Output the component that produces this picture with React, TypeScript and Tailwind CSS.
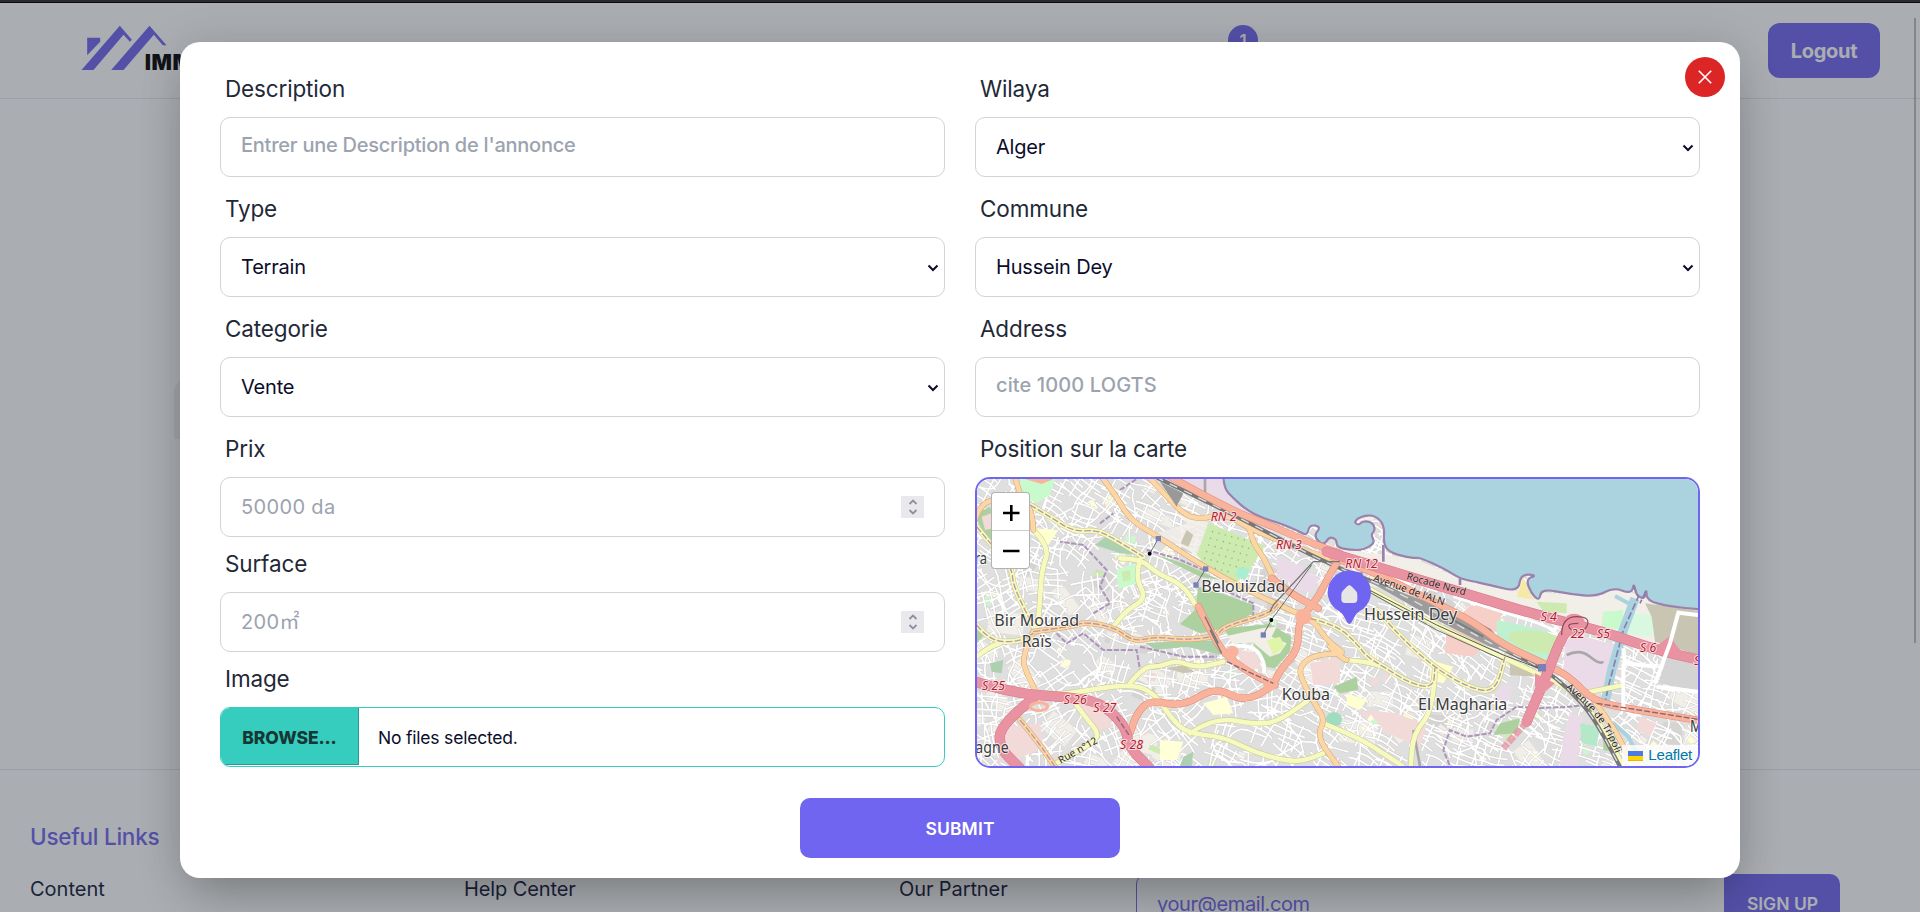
import React from "react";

type Pt = [number, number];

const smooth = (pts: Pt[]) => {
  let d = `M${pts[0][0]} ${pts[0][1]}`;
  for (let i = 1; i < pts.length - 1; i++) {
    const mx = (pts[i][0] + pts[i + 1][0]) / 2;
    const my = (pts[i][1] + pts[i + 1][1]) / 2;
    d += `Q${pts[i][0]} ${pts[i][1]} ${mx} ${my}`;
  }
  const last = pts[pts.length - 1];
  return d + `L${last[0]} ${last[1]}`;
};

const makeRandom = (seed: number) => () => {
  seed = (seed * 1664525 + 1013904223) % 4294967296;
  return seed / 4294967296;
};

// Small residential streets: rotated clusters of blocks plus winding lanes.
const buildStreets = () => {
  const rnd = makeRandom(77);
  let grid = "";
  let lanes = "";
  for (let gx = 0; gx < 22; gx++) {
    for (let gy = 0; gy < 10; gy++) {
      const cx = 40 + gx * 102 + (rnd() - 0.5) * 40;
      const cy = 60 + gy * 92 + (rnd() - 0.5) * 40;
      const a = gx < 9 && gy > 2 ? rnd() * 3 : 0.5 + (rnd() - 0.5) * 0.5;
      const c = Math.cos(a);
      const s = Math.sin(a);
      const p = (u: number, v: number) =>
        `${(cx + u * c - v * s).toFixed(0)} ${(cy + u * s + v * c).toFixed(0)}`;
      const n = 3 + Math.floor(rnd() * 3);
      for (let k = 0; k < n; k++) {
        const v = -42 + k * 22 + rnd() * 7;
        const b = (rnd() - 0.5) * 36;
        grid += `M${p(-30 - rnd() * 30, v)}Q${p(0, v + b)} ${p(30 + rnd() * 30, v)}`;
      }
      grid += `M${p(-24, -45)}L${p(-20 + rnd() * 10, 45)}M${p(24, -45)}L${p(20 + rnd() * 10, 40)}`;
      let x = cx;
      let y = cy;
      let dir = rnd() * 6.3;
      lanes += `M${x.toFixed(0)} ${y.toFixed(0)}`;
      for (let k = 0; k < 5; k++) {
        dir += (rnd() - 0.5) * 1.6;
        const x1 = x + Math.cos(dir) * 20;
        const y1 = y + Math.sin(dir) * 20;
        dir += (rnd() - 0.5) * 1.6;
        x = x1 + Math.cos(dir) * 20;
        y = y1 + Math.sin(dir) * 20;
        lanes += `Q${x1.toFixed(0)} ${y1.toFixed(0)} ${x.toFixed(0)} ${y.toFixed(0)}`;
      }
    }
  }
  return { grid, lanes };
};

const buildPatches = () => {
  const rnd = makeRandom(9);
  const fills = ["#f2efe9", "#f2efe9", "#d6d4d3", "#ffffe0", "#f2dad9", "#f2efe9", "#ffffd0", "#cdebb0", "#c8facc"];
  return Array.from({ length: 210 }, (_, i) => {
    const x = rnd() * 2180;
    const y = 30 + rnd() * 850;
    const big = i < 70;
    const w = big ? 50 + rnd() * 60 : 14 + rnd() * 24;
    const h = big ? 30 + rnd() * 40 : 12 + rnd() * 18;
    const f = big ? fills[Math.floor(rnd() * 3)] : fills[Math.floor(rnd() * fills.length)];
    return { x, y, w, h, f, r: rnd() * 60 };
  });
};

const STREETS = buildStreets();
const PATCHES = buildPatches();

const COAST: Pt[] = [
  [760, 20], [762, 55], [790, 85], [830, 120], [880, 145], [930, 160], [980, 180], [1012, 198], [1018, 164],
  [1054, 170], [1030, 198], [1060, 228], [1078, 200], [1100, 208], [1100, 232], [1140, 240], [1180, 240],
  [1216, 218], [1202, 195], [1216, 180], [1208, 158], [1180, 152], [1165, 166], [1152, 155], [1172, 140],
  [1212, 134], [1244, 165], [1240, 225], [1265, 250], [1330, 265], [1348, 262], [1420, 295], [1470, 325],
  [1500, 332], [1560, 345], [1645, 366], [1652, 312], [1702, 316], [1668, 326], [1682, 368], [1708, 394],
  [1714, 356], [1800, 372], [1880, 380], [1930, 352], [1985, 372], [1992, 338], [1998, 376], [2024, 388],
  [2030, 356], [2030, 392], [2100, 410], [2190, 418],
];

const ORANGE: Pt[][] = [
  [[395, 20], [440, 80], [480, 150], [565, 200], [700, 290], [850, 370], [960, 420], [1030, 450], [1070, 510], [1115, 545]],
  [[535, 20], [600, 90], [640, 130], [680, 148], [770, 132], [835, 175], [1000, 240], [1110, 275]],
  [[800, 145], [835, 160], [850, 220], [880, 260], [915, 335]],
  [[15, 150], [30, 105], [80, 85], [130, 100]],
  [[135, 20], [150, 80], [185, 120], [190, 180]],
  [[190, 485], [300, 470], [350, 455], [440, 475], [490, 515], [560, 500], [640, 510], [740, 500], [760, 470], [900, 430], [925, 400]],
  [[190, 485], [155, 560], [170, 610], [200, 670]],
  [[150, 750], [200, 810], [255, 890]],
  [[1115, 550], [1040, 550], [985, 590], [1000, 640], [1040, 710], [1065, 750], [1040, 800], [1105, 890]],
  [[1080, 530], [1110, 560], [1130, 570]],
  [[1870, 690], [1930, 770], [1970, 850]],
];

const YELLOW: Pt[][] = [
  [[180, 105], [240, 140], [310, 185], [380, 180], [430, 205], [520, 260]],
  [[190, 180], [240, 230], [215, 300], [210, 400], [200, 485]],
  [[450, 265], [510, 265], [560, 310], [640, 345], [680, 410]],
  [[510, 270], [495, 320], [530, 385], [470, 420], [430, 470]],
  [[20, 465], [60, 515], [150, 515], [190, 490]],
  [[20, 560], [60, 530], [90, 520]],
  [[20, 170], [60, 220], [125, 290], [130, 350], [190, 470]],
  [[240, 675], [300, 670], [480, 640], [555, 670], [600, 740], [650, 790], [760, 800], [860, 850], [980, 880], [1060, 850]],
  [[480, 640], [520, 590], [570, 590], [620, 570], [680, 595], [760, 575]],
  [[660, 790], [730, 740], [870, 765], [930, 750], [1010, 695]],
  [[300, 680], [345, 740], [395, 800], [330, 840], [250, 885]],
  [[1020, 445], [1100, 465], [1160, 520], [1190, 560], [1240, 590], [1320, 640], [1390, 655], [1395, 590]],
  [[1220, 420], [1290, 500], [1390, 590], [1490, 650], [1575, 670], [1605, 560]],
  [[1395, 600], [1390, 720], [1330, 790], [1322, 890]],
  [[1060, 760], [1160, 800], [1240, 850], [1300, 890]],
  [[1150, 330], [1300, 415], [1480, 505], [1700, 610], [1790, 650], [1880, 740], [1960, 890]],
  [[1125, 570], [1190, 575], [1240, 590]],
  [[1840, 670], [1960, 645]],
];

const SALMON: Pt[][] = [
  [[685, 410], [720, 480], [760, 550], [840, 610], [915, 645]],
  [[1105, 270], [1070, 330], [1040, 390], [985, 450], [985, 540], [930, 600], [905, 655], [820, 695], [735, 650], [640, 710], [540, 690], [500, 730], [480, 790]],
  [[905, 325], [960, 370], [1045, 415]],
  [[600, 20], [780, 120], [900, 165], [1000, 210], [1110, 250]],
  [[1090, 262], [1200, 300], [1400, 400], [1510, 455], [1600, 525], [1720, 580], [1800, 620], [1870, 695], [2000, 720], [2190, 752]],
];

const MOTORWAY: Pt[][] = [
  [[15, 635], [130, 670], [300, 682], [380, 695], [430, 730], [470, 780], [475, 830], [540, 895]],
  [[190, 685], [95, 760], [85, 830], [150, 895]],
  [[1070, 245], [1250, 300], [1450, 360], [1700, 435], [1900, 485], [2060, 540], [2190, 570]],
  [[1805, 460], [1775, 500], [1740, 590], [1715, 650], [1670, 755]],
];

function Roads({ roads, casing, fill, width }: { roads: Pt[][]; casing: string; fill: string; width: number }) {
  const d = roads.map(smooth).join("");
  return (
    <g fill="none" strokeLinecap="round" strokeLinejoin="round">
      <path d={d} stroke={casing} strokeWidth={width + 3} />
      <path d={d} stroke={fill} strokeWidth={width} />
    </g>
  );
}

function MapLabel({ x, y, w, children }: { x: number; y: number; w: number; children: string }) {
  return (
    <text x={x} y={y} textLength={w} lengthAdjust="spacingAndGlyphs" fontSize="46" fill="#3c3c3c" stroke="#ffffff" strokeOpacity="0.75" strokeWidth="6" paintOrder="stroke">
      {children}
    </text>
  );
}

function RoadRef({ x, y, children }: { x: number; y: number; children: string }) {
  return (
    <text x={x} y={y} fontSize="37" fontStyle="italic" fill="#b3202c" stroke="#f7dfe2" strokeWidth="6" paintOrder="stroke">
      {children}
    </text>
  );
}

function StreetMap() {
  const coast = smooth(COAST);
  const rail: Pt[] = [[555, 20], [700, 90], [850, 165], [1080, 285], [1250, 350], [1420, 440], [1560, 520], [1720, 595], [1800, 660], [1870, 740], [1950, 890]];
  return (
    <svg viewBox="21 27 2163 861" preserveAspectRatio="none" className="block h-full w-full font-['Noto_Sans',sans-serif]">
      <rect x="0" y="0" width="2200" height="900" fill="#e0dfdf" />
      {PATCHES.map((p, i) => (
        <rect key={i} x={p.x} y={p.y} width={p.w} height={p.h} fill={p.f} transform={`rotate(${p.r} ${p.x} ${p.y})`} />
      ))}
      <path d={STREETS.grid + STREETS.lanes} fill="none" stroke="#cfcdcb" strokeWidth="7.5" strokeLinecap="round" />
      <path d={STREETS.grid + STREETS.lanes} fill="none" stroke="#ffffff" strokeWidth="5" strokeLinecap="round" />

      <path d="M1110 238L1330 265 1480 330 1640 362 1890 380 1930 355 2184 418V560L1900 480 1450 350 1110 255Z" fill="#f2efe9" />
      <path d="M590 27H762L790 95 930 170 1010 210 1000 225 780 130Z" fill="#e9dbe8" />
      <path d="M540 27L620 130 700 150 720 160 680 255 560 190 650 160Z" fill="#f2efe9" opacity="0.8" />
      <path d="M650 180L670 195 655 230 632 220Z" fill="#c8c6b3" />
      <path d="M150 27H255L240 75 200 100 155 75Z" fill="#c8facc" />
      <path d="M165 27H250L215 42Z" fill="#f9b29c" />
      <path d="M21 130L60 110 80 170 60 220 25 160Z" fill="#add19e" />
      <path d="M35 140L65 130 70 175 45 180Z" fill="#f2dad9" />
      <path d="M195 175L265 180 235 225Z" fill="#ffffd0" />
      <path d="M375 225L420 190 480 235 510 255 450 250Z" fill="#add0b0" />
      <path d="M440 300L495 280 500 340 445 358Z" fill="#c8facc" />
      <path d="M455 305L480 300 482 330 460 335Z" fill="#cdebb0" />
      <path d="M560 255L640 280 750 330 690 320Z" fill="#add0a0" />
      <path d="M715 158L885 228 835 305 795 340 720 300 680 255Z" fill="#cdebb0" />
      <g fill="#8fbf75">
        {Array.from({ length: 40 }, (_, i) => (
          <circle key={i} cx={728 + (i % 7) * 19 - Math.floor(i / 7) * 6} cy={185 + Math.floor(i / 7) * 20 + (i % 7) * 5} r="2.4" />
        ))}
      </g>
      <path d="M805 290L842 300 825 330 797 318Z" fill="#a8eed0" />
      <path d="M685 350L760 372 850 405 848 432 740 480 690 490 630 462 675 420Z" fill="#add19e" />
      <path d="M525 520L640 512 745 512 755 555 650 530 560 540Z" fill="#add0a8" />
      <path d="M760 475L900 462 965 500 960 545 915 595 885 590 850 520 790 520Z" fill="#add19e" />
      <path d="M770 498L880 474 920 470 905 500 950 520 930 550 900 560 850 518 790 520Z" fill="#f2efe9" />
      <path d="M890 510L930 500 945 530 910 555Z" fill="#dff5a8" />
      <path d="M800 540L850 545 880 600 820 590Z" fill="#f2dad9" />
      <path d="M785 530Q850 520 870 555T880 610" fill="none" stroke="#ffffff" strokeWidth="11" />
      <path d="M920 260L1000 290 985 350 920 320Z" fill="#ebdbe8" />
      <path d="M985 300L1050 320 1025 370 965 355Z" fill="#ebdbe8" />
      <path d="M1020 580L1110 560V640L1030 645Z" fill="#f2dad9" />
      <path d="M330 700L400 720 430 770 370 785Z" fill="#f2dad9" />
      <path d="M110 770L210 760 220 830 140 870 100 830Z" fill="#f2dad9" />
      <path d="M60 580L100 570 95 610 65 605Z" fill="#add0b0" />
      <path d="M21 470L45 490 21 520Z" fill="#add19e" />
      <path d="M590 595L640 585 675 605 640 610Z" fill="#c8c6b3" />
      <path d="M570 810L640 815 620 870 570 870Z" fill="#ffffd8" />
      <path d="M700 700L770 680 790 730 730 735Z" fill="#ffffd8" />
      <path d="M640 860L670 845 665 888 630 888Z" fill="#add0b0" />
      <ellipse cx="1092" cy="748" rx="24" ry="22" fill="#9fdcc0" />
      <path d="M1190 720L1280 730 1370 765 1350 830 1250 790Z" fill="#f2dad9" />
      <path d="M1090 650L1160 620 1165 660 1110 670Z" fill="#add19e" />
      <path d="M1130 670L1190 690 1170 720 1130 705Z" fill="#ffffd0" />
      <path d="M1500 405L1600 420 1580 480 1510 560 1425 550 1430 480Z" fill="#f5cfc8" />
      <path d="M1580 450L1720 480 1760 500 1740 575 1640 545 1580 500Z" fill="#bff0cf" />
      <path d="M1620 488Q1690 470 1765 500V545Q1680 560 1615 510Z" fill="#cdebb0" />
      <path d="M1700 395L1790 400V430L1720 425Z" fill="#cdebb0" />
      <path d="M1660 320L1682 375 1695 390 1640 380Z" fill="#f5e9a8" />
      <path d="M1380 570L1450 590 1420 640 1380 630Z" fill="#ffffc8" />
      <path d="M1620 570L1680 600 1690 620 1620 615Z" fill="#c8c6b3" />
      <path d="M1600 640L1630 650 1610 700 1570 690Z" fill="#ebdbe8" />
      <path d="M1810 490L1955 530 1905 650 1880 690 1780 600 1785 520Z" fill="#ebdbe8" />
      <path d="M1900 425L1960 420 1955 480 1895 470Z" fill="#c8facc" />
      <path d="M1975 430L2050 435 2045 500 1970 490Z" fill="#d8f8e0" />
      <path d="M2025 400L2184 422V555L2055 515 2045 440Z" fill="#c8c6b3" />
      <path d="M2095 550L2184 570V662L2065 640Z" fill="#d4d4d4" />
      <path d="M1800 730L1840 740 1820 888H1770L1780 800Z" fill="#ebdbe8" />
      <path d="M1830 760L1890 770 1880 830 1835 820Z" fill="#b5e8c8" />
      <path d="M1900 780L1930 800 1950 850 1900 840Z" fill="#add19e" />
      <path d="M1590 760L1650 745 1640 790 1570 795Z" fill="#add19e" />
      <path d="M2010 740L2060 760 2040 800 2000 780Z" fill="#f2dad9" />

      <path d={coast + "L2190 20Z"} fill="#aad3df" />
      <path d={coast} fill="none" stroke="#9a82ad" strokeWidth="6.5" strokeLinejoin="round" />
      <path d="M1240 225V275M1470 325V345" stroke="#9a82ad" strokeWidth="8" fill="none" />
      <path d="M1995 385L1960 480 1925 600 1905 700" fill="none" stroke="#aad3df" strokeWidth="28" />
      <path d="M1935 378L1985 405M1930 760L1975 800 2010 870" fill="none" stroke="#aad3df" strokeWidth="12" />
      <path d="M1990 345L2005 380 1960 480 1915 650 1905 700M2028 362L2010 400" fill="none" stroke="#8b7da8" strokeWidth="5" strokeDasharray="22 8" />

      <path
        d="M370 430L420 400 390 350 410 300 340 225 270 215M260 490L290 520 340 490 400 540 500 540 510 600M530 240L620 265 700 300M740 350L850 400 850 440M1890 700L1800 710 1700 715 1640 710 1580 750 1560 790 1490 800 1440 780 1420 840 1440 888M390 160L430 130M450 60L500 27M510 530L640 560 740 560"
        fill="none"
        stroke="#ac94ba"
        strokeWidth="6"
        strokeDasharray="16 5"
      />
      <path d="M1790 555Q1830 535 1860 560T1900 575M705 27V100M1330 780L1350 888" fill="none" stroke="#a8a8a8" strokeWidth="8" />

      <Roads roads={YELLOW} casing="#c3c78e" fill="#f7fabf" width={14} />
      <Roads roads={ORANGE} casing="#d0a470" fill="#fcd6a4" width={14} />
      <path
        d={smooth(YELLOW[0]) + smooth(YELLOW[4]) + smooth(YELLOW[6]) + smooth(ORANGE[5]) + smooth(ORANGE[7]) + smooth(YELLOW[11]) + smooth(YELLOW[12])}
        fill="none"
        stroke="#b79aa5"
        strokeWidth="4"
        strokeDasharray="20 6"
      />
      <path d={smooth(rail)} fill="none" stroke="#777777" strokeWidth="12" />
      <path d="M570 35L640 70 620 110Z" fill="#999999" />
      <path d="M1180 325L1370 395 1500 440 1570 490 1650 560 1560 530 1400 450Z" fill="#9c9c9c" />
      <path d="M1480 435L1560 480 1600 530M1450 450L1540 500" fill="none" stroke="#7d7d7d" strokeWidth="6" />
      <path d={smooth(rail)} fill="none" stroke="#dddddd" strokeWidth="4" strokeDasharray="26 22" />
      <path d="M1140 330L1400 465 1600 555 1720 600" fill="none" stroke="#555555" strokeWidth="3" />
      <path d="M1160 345L1400 480 1600 570" fill="none" stroke="#555555" strokeWidth="2.5" />
      <Roads roads={SALMON} casing="#dd8b76" fill="#f9b29c" width={19} />
      <Roads roads={MOTORWAY} casing="#d8788c" fill="#e892a2" width={28} />
      <path d="M1670 755L1600 835" fill="none" stroke="#e892a2" strokeWidth="20" strokeDasharray="24 5" opacity="0.75" />
      <circle cx="1812" cy="465" r="34" fill="#e892a2" />
      <path d="M1775 495Q1775 440 1820 440T1850 470Q1830 500 1805 480T1825 460" fill="none" stroke="#8c4a58" strokeWidth="3.5" />
      <path d="M1695 610L1755 640 1720 670 1695 650Z" fill="#e892a2" />
      <path d="M2105 495Q2112 530 2145 550L2050 535Z" fill="#e892a2" />
      <circle cx="788" cy="545" r="18" fill="#f9b29c" />
      <circle cx="1000" cy="440" r="24" fill="#f9b29c" />
      <circle cx="900" cy="643" r="20" fill="#f9b29c" />
      <path d="M1450 380L1700 458 1760 482" fill="none" stroke="#ffffff" strokeWidth="8" />
      <path d="M2184 435L2125 428 2100 520 2055 640M1960 535L1965 580 2060 590M1960 580V720M2060 650L2184 665" fill="none" stroke="#ffffff" strokeWidth="12" />
      <path d="M720 480L755 550M705 440L745 520M1110 275H1030L910 405 900 425" fill="none" stroke="#777777" strokeWidth="4" />
      <path d="M770 575L910 640M440 740L480 800M1880 700L2184 748" fill="none" stroke="#8c6670" strokeWidth="4" strokeDasharray="18 6" />
      <ellipse cx="207" cy="710" rx="26" ry="12" fill="none" stroke="#f9b29c" strokeWidth="9" />

      <path d="M565 206L539 251M707 296L678 345M1025 285L904 450L880 494" fill="none" stroke="#555555" strokeWidth="2.5" />
      <g fill="#7880b8">
        <rect x="557" y="198" width="16" height="16" />
        <rect x="699" y="289" width="16" height="16" />
        <rect x="670" y="337" width="16" height="16" />
        <rect x="872" y="487" width="16" height="16" />
        <rect x="1704" y="582" width="24" height="22" />
        <rect x="1160" y="307" width="18" height="16" />
      </g>
      <circle cx="539" cy="251" r="6" />
      <circle cx="904" cy="450" r="6" />

      <RoadRef x={722} y={153}>RN 2</RoadRef>
      <RoadRef x={918} y={236}>RN 3</RoadRef>
      <RoadRef x={1126} y={295}>RN 12</RoadRef>
      <RoadRef x={36} y={661}>S 25</RoadRef>
      <RoadRef x={281} y={701}>S 26</RoadRef>
      <RoadRef x={370} y={727}>S 27</RoadRef>
      <RoadRef x={450} y={836}>S 28</RoadRef>
      <RoadRef x={1712} y={454}>S 4</RoadRef>
      <RoadRef x={1803} y={503}>22</RoadRef>
      <RoadRef x={1881} y={503}>S5</RoadRef>
      <RoadRef x={2010} y={546}>S 6</RoadRef>
      <RoadRef x={2172} y={585}>S</RoadRef>

      <defs>
        <path id="aln" d="M1208 332L1440 414" />
        <path id="rocade" d="M1308 328L1520 386" />
        <path id="tripoli" d="M1786 655Q1865 715 1900 775T1945 880" />
        <path id="rue12" d="M272 882L395 812" />
      </defs>
      <g fontSize="30" fill="#2e2420" stroke="#ffffff" strokeOpacity="0.35" strokeWidth="3" paintOrder="stroke">
        <text><textPath href="#aln" textLength="225">Avenue de l'ALN</textPath></text>
        <text><textPath href="#rocade" textLength="183">Rocade Nord</textPath></text>
        <text><textPath href="#tripoli" textLength="250">Avenue de Tripoli</textPath></text>
        <text><textPath href="#rue12" textLength="130">Rue n°12</textPath></text>
      </g>

      <MapLabel x={694} y={367} w={252}>Belouizdad</MapLabel>
      <MapLabel x={73} y={467} w={254}>Bir Mourad</MapLabel>
      <MapLabel x={155} y={530} w={90}>Raïs</MapLabel>
      <MapLabel x={935} y={689} w={145}>Kouba</MapLabel>
      <MapLabel x={1344} y={719} w={268}>El Magharia</MapLabel>
      <MapLabel x={1182} y={449} w={280}>Hussein Dey</MapLabel>
      <MapLabel x={14} y={281} w={37}>ra</MapLabel>
      <MapLabel x={16} y={850} w={100}>agne</MapLabel>
      <MapLabel x={2160} y={786} w={36}>M</MapLabel>

      <path d="M1138 462Q1132 460 1126 446 1120 432 1108 424A65 65 0 1 1 1168 424Q1156 432 1150 446 1144 460 1138 462Z" fill="#7065f0" />
      <path d="M1138 345Q1142 345 1158 363 1162 367 1162 374V388Q1162 399 1151 399H1125Q1114 399 1114 388V374Q1114 367 1118 363 1134 345 1138 345Z" fill="#e6e6e6" />
    </svg>
  );
}

const LABEL = "flex items-center pl-[5px] text-[22.5px] leading-7 tracking-[-0.15px] text-[#1f2937]";
const BOX = "h-[60px] w-full rounded-[10px] border border-[#d2d3d7] bg-white px-5 text-[20px] outline-none";

function SelectField({ label, value }: { label: string; value: string }) {
  return (
    <div className="h-[120px]">
      <label className={`${LABEL} h-[60px] pt-1`}>{label}</label>
      <div className="relative">
        <select className={`${BOX} appearance-none tracking-[-0.2px] text-[#0b0d2b]`} defaultValue={value}>
          <option>{value}</option>
        </select>
        <svg viewBox="0 0 12 8" className="pointer-events-none absolute top-[27px] right-[6.5px] h-2 w-3">
          <path d="M1.5 1.5L6 6L10.5 1.5" fill="none" stroke="#0b0d2b" strokeWidth="2" />
        </svg>
      </div>
    </div>
  );
}

function TextField({ label, placeholder, wide }: { label: string; placeholder: string; wide?: boolean }) {
  return (
    <div className="h-[120px]">
      <label className={`${LABEL} h-[60px] pt-1`}>{label}</label>
      <input
        className={`${BOX} pb-1 font-medium placeholder:text-[#9ca3af] ${wide ? "tracking-[0.12px]" : "tracking-[-0.24px]"}`}
        placeholder={placeholder}
      />
    </div>
  );
}

function NumberField({ label, placeholder, first }: { label: string; placeholder: string; first?: boolean }) {
  return (
    <div className={first ? "h-[120px]" : "h-[115px]"}>
      <label className={`${LABEL} ${first ? "h-[60px] pt-1" : "h-[55px] pb-0.5"}`}>{label}</label>
      <div className="relative">
        <input className={`${BOX} tracking-[0.35px] placeholder:text-[#9ca3af]`} placeholder={placeholder} />
        <div className="absolute top-[19px] right-[21px] flex h-[22px] w-[23px] items-center justify-center bg-[#e9e9ed]">
          <svg viewBox="0 0 10 16" className="h-4 w-2.5" fill="none" stroke="#8f8f9d" strokeWidth="1.8">
            <path d="M1.5 5L5 1.5L8.5 5M1.5 11L5 14.5L8.5 11" />
          </svg>
        </div>
      </div>
    </div>
  );
}

export default function App() {
  return (
    <div className="relative flex h-[912px] w-full flex-col overflow-hidden bg-white font-['Inter','Noto_Sans_CJK_JP',sans-serif] text-[#10163a]">
      <header className="flex h-[99px] shrink-0 items-start justify-between border-b border-[#e5e7eb] pr-10 pl-[80px]">
        <svg viewBox="240 70 440 150" className="mt-[23px] h-[50px] w-[147px]">
          <path d="M261 114H300V126L261 167Z" fill="#7065f0" />
          <path d="M244 211L359 78L395 120L389 126L370 105L280 211Z" fill="#7065f0" />
          <path d="M333 211L448 78L499 137H488L461 105L370 211Z" fill="#7065f0" />
          <text x="434" y="210" fontSize="64" fontWeight="900" letterSpacing="1.5" fill="#000000">IMMO</text>
        </svg>
        <div className="mt-[25px] mr-auto ml-[1001px] flex h-[30px] w-[30px] items-center justify-center rounded-full bg-[#7065f0] pt-1 text-[17px] font-semibold text-white">1</div>
        <button className="mt-[23px] h-[55px] w-[112px] rounded-[12px] bg-[#7065f0] text-[20px] font-bold tracking-[-0.3px] text-white">Logout</button>
      </header>
      <main className="flex h-[670px] shrink-0 items-start pl-[174px]">
        <div className="mt-[281px] h-[59px] w-[300px] rounded-tl-[12px] bg-[#f1f1f2]" />
      </main>
      <footer className="flex grow border-t border-[#e5e7eb] pl-[30px]">
        <div className="w-[434px] pt-[53px]">
          <h2 className="text-[22.5px] leading-7 font-medium tracking-[-0.25px] text-[#7065f0]">Useful Links</h2>
          <p className="mt-[24px] text-[20px] leading-7 tracking-[0px]">Content</p>
        </div>
        <p className="w-[435px] pt-[105px] text-[20px] leading-7 tracking-[-0.1px]">Help Center</p>
        <p className="w-[237px] pt-[105px] text-[20px] leading-7 tracking-[-0.1px]">Our Partner</p>
        <div className="mt-[104px] flex h-[60px]">
          <div className="flex w-[589px] items-center rounded-l-[10px] border border-[#7065f0] pl-5 text-[20px] tracking-[-0.4px] text-[#7065f0]">your@email.com</div>
          <div className="flex w-[115px] items-center justify-center rounded-r-[10px] bg-[#7065f0] text-[17.5px] font-semibold text-white">SIGN UP</div>
        </div>
      </footer>

      <div className="absolute inset-0 bg-[#2a323c]/40" />
      <div className="absolute inset-x-0 top-0 h-[3px] border-b border-[#0c0c0d] bg-[#2b2a33]" />
      <div className="absolute top-[18px] right-1 h-[625px] w-0.5 bg-[#878685]" />

      <div className="absolute top-[42px] left-[180px] flex h-[836px] w-[1560px] flex-col items-center rounded-[20px] bg-white px-10 pt-[15px] shadow-[0_25px_50px_-12px_rgba(0,0,0,0.25),0_0_44px_rgba(0,0,0,0.1)]">
        <button aria-label="Fermer" className="absolute top-[15px] right-[15px] flex h-10 w-10 items-center justify-center rounded-full bg-[#dc2626]">
          <svg viewBox="0 0 14 14" className="h-3.5 w-3.5">
            <path d="M0.8 0.8L13.2 13.2M13.2 0.8L0.8 13.2" stroke="#ffffff" strokeWidth="1.6" />
          </svg>
        </button>
        <div className="flex w-full gap-[30px]">
          <div className="w-[725px]">
            <TextField label="Description" placeholder="Entrer une Description de l'annonce" />
            <SelectField label="Type" value="Terrain" />
            <SelectField label="Categorie" value="Vente" />
            <NumberField label="Prix" placeholder="50000 da" first />
            <NumberField label="Surface" placeholder="200㎡" />
            <label className={`${LABEL} h-[55px] pb-0.5`}>Image</label>
            <div className="flex h-[60px] items-start overflow-hidden rounded-[10px] border border-[#37cdbe]">
              <div className="flex h-[57px] w-[138px] items-center justify-center border-r border-b border-[#2a9a8f] bg-[#37cdbe] pt-1 text-[17.5px] font-extrabold tracking-[-0.1px] text-[#163835]">BROWSE...</div>
              <div className="flex h-[60px] items-center pl-[19px] text-[17.5px] tracking-[-0.2px] text-[#0b0d2b]">No files selected.</div>
            </div>
          </div>
          <div className="w-[725px]">
            <SelectField label="Wilaya" value="Alger" />
            <SelectField label="Commune" value="Hussein Dey" />
            <TextField label="Address" placeholder="cite 1000 LOGTS" wide />
            <label className={`${LABEL} h-[60px] pt-1`}>Position sur la carte</label>
            <div className="relative h-[291px] overflow-hidden rounded-[15px] border-2 border-[#7065f0]">
              <StreetMap />
              <div className="absolute top-[13px] left-[14px] h-[77px] w-[39px] rounded-[4px] border border-black/30 bg-white">
                <svg viewBox="0 0 37 75" className="h-full w-full">
                  <path d="M0 37.5H37" stroke="#cccccc" />
                  <path d="M11 20H27.5M19.3 12V28M11 58H27.5" stroke="#000000" strokeWidth="2.6" fill="none" />
                </svg>
              </div>
              <div className="absolute right-0 bottom-0 flex h-[21px] items-center gap-[5px] bg-white/80 pr-1.5 pl-1.5 font-['Liberation_Sans',sans-serif] text-[15px] tracking-[-0.2px] text-[#0078a8]">
                <svg viewBox="0 0 15 10" className="h-2.5 w-[15px]">
                  <path fill="#4c7be1" d="M0 0h15v5H0z" />
                  <path fill="#ffd500" d="M0 5h15v4H0z" />
                  <path fill="#e0bc00" d="M0 9h15v1H0z" />
                </svg>
                Leaflet
              </div>
            </div>
          </div>
        </div>
        <button className="mt-[30px] h-[60px] w-80 shrink-0 rounded-[10px] bg-[#7065f0] pt-0.5 text-[17.5px] font-semibold tracking-[0.15px] text-white">SUBMIT</button>
      </div>
    </div>
  );
}
